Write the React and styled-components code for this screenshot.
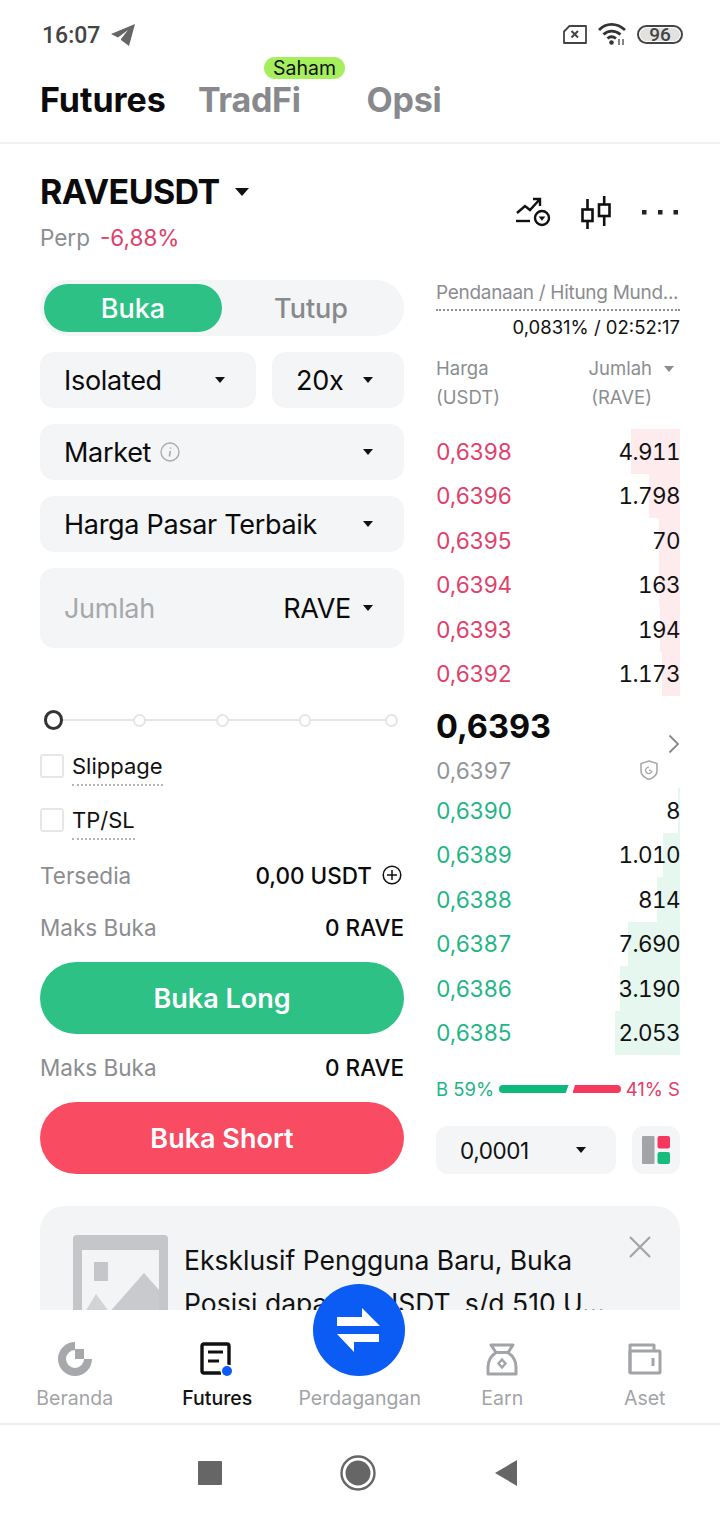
import React from "react";
import styled, { createGlobalStyle } from "styled-components";

const Global = createGlobalStyle`
  html, body { margin: 0; padding: 0; background: #fff; }
  * { box-sizing: border-box; }
  body { font-family: Inter, "Liberation Sans", sans-serif; color: #111; }
`;

const Page = styled.div`
  position: relative;
  width: 720px;
  height: 1520px;
  overflow: hidden;
  background: #fff;
  display: flex;
  flex-direction: column;
`;

const StatusBar = styled.div`
  height: 70px;
  padding: 0 37px 0 42px;
  display: flex;
  align-items: center;
  justify-content: space-between;
`;
const StatusLeft = styled.div`
  display: flex;
  align-items: center;
  gap: 10px;
  font-family: Roboto, sans-serif;
  font-size: 23px;
  font-weight: 500;
  color: #444;
`;
const StatusRight = styled.div`
  display: flex;
  align-items: center;
  gap: 11px;
  margin-top: -2px;
`;
const Battery = styled.div`
  width: 46px;
  height: 19px;
  border: 2px solid #444;
  border-radius: 10px;
  padding: 1px;
  display: flex;
`;
const BatteryFill = styled.div`
  flex: 1;
  background: #e2e2e2;
  border-radius: 8px;
  font-family: Roboto, sans-serif;
  font-size: 19px;
  font-weight: 500;
  line-height: 13px;
  text-align: center;
  color: #444;
`;

const Tabs = styled.div`
  position: relative;
  height: 74px;
  padding: 10px 40px 0;
  display: flex;
  align-items: flex-start;
  border-bottom: 2px solid #f1f2f3;
`;
const Tab = styled.div`
  font-size: 34px;
  line-height: 40px;
  font-weight: 700;
  letter-spacing: ${(p) => (p.$active ? 0 : -0.3)}px;
  color: ${(p) => (p.$active ? "#0b0b0b" : "#87898c")};
  margin-right: ${(p) => p.$gap || 0}px;
`;
const Badge = styled.div`
  position: absolute;
  left: 264px;
  top: -13px;
  width: 81px;
  height: 22px;
  border-radius: 11px;
  background: #a5ef5c;
  color: #111;
  font-size: 19.5px;
  line-height: 23px;
  text-align: center;
`;

const Main = styled.div`
  flex: 1;
  min-height: 0;
  overflow: hidden;
  padding: 0 40px;
`;

const SymbolHeader = styled.div`
  height: 134px;
  padding-top: 28px;
  display: flex;
  justify-content: space-between;
`;
const SymbolRow = styled.div`
  display: flex;
  align-items: center;
  gap: 15px;
  font-size: 34px;
  line-height: 40px;
  font-weight: 700;
  letter-spacing: -0.6px;
  color: #0b0b0b;
`;
const SubRow = styled.div`
  margin-top: 11px;
  display: flex;
  gap: 10px;
  font-size: 22.5px;
  line-height: 30px;
`;
const Muted = styled.span`
  color: #8b8d90;
`;
const Change = styled.span`
  color: #e0406a;
`;
const Tools = styled.div`
  display: flex;
  align-items: center;
  gap: 28px;
  padding-top: 18px;
  height: 62px;
`;

const Columns = styled.div`
  display: grid;
  grid-template-columns: 364px 244px;
  column-gap: 32px;
`;
const LeftCol = styled.div`
  display: flex;
  flex-direction: column;
`;
const RightCol = styled.div`
  display: flex;
  flex-direction: column;
`;

const Toggle = styled.div`
  height: 56px;
  border-radius: 28px;
  background: #f4f5f7;
  padding: 4px;
  display: grid;
  grid-template-columns: 178px 1fr;
  margin-top: 2px;
`;
const ToggleOpt = styled.div`
  border-radius: 24px;
  display: flex;
  align-items: center;
  justify-content: center;
  font-size: 27px;
  font-weight: 500;
  background: ${(p) => (p.$active ? "#2dc186" : "transparent")};
  color: ${(p) => (p.$active ? "#fff" : "#87898c")};
`;

const Fields = styled.div`
  display: flex;
  flex-direction: column;
  gap: 16px;
  margin-top: 16px;
`;
const FieldRow = styled.div`
  display: grid;
  grid-template-columns: 216px 132px;
  column-gap: 16px;
`;
const Field = styled.div`
  height: ${(p) => p.$h || 56}px;
  border-radius: 14px;
  background: #f4f5f7;
  padding: 0 31px 0 24px;
  display: flex;
  align-items: center;
  justify-content: space-between;
  font-size: 27px;
  letter-spacing: -0.3px;
  font-weight: 400;
  color: #0b0b0b;
`;
const FieldLabel = styled.span`
  display: inline-flex;
  align-items: center;
  gap: 9px;
`;
const Placeholder = styled.span`
  color: #a6a8ab;
`;
const Caret = styled.i`
  display: inline-block;
  width: 0;
  height: 0;
  border-left: ${(p) => p.$s || 5}px solid transparent;
  border-right: ${(p) => p.$s || 5}px solid transparent;
  border-top: ${(p) => (p.$s || 5) + 1}px solid ${(p) => p.$c || "#111"};
`;
const UnitCaret = styled.span`
  display: inline-flex;
  align-items: center;
  gap: 12px;
`;

const Slider = styled.div`
  position: relative;
  height: 20px;
  margin: 62px 6px 0 4px;
  display: flex;
  align-items: center;
  gap: 70px;
`;
const SliderLine = styled.div`
  position: absolute;
  left: 10px;
  right: 6px;
  top: 9px;
  height: 2px;
  background: #e4e5e7;
`;
const Knob = styled.div`
  position: relative;
  width: 20px;
  height: 20px;
  border-radius: 50%;
  background: #fff;
  border: 3px solid #333;
`;
const Dot = styled.div`
  position: relative;
  width: 13px;
  height: 13px;
  border-radius: 50%;
  background: #fff;
  border: 2px solid #e4e5e7;
  margin-left: ${(p) => (p.$last ? 4 : 0)}px;
`;

const CheckRow = styled.div`
  display: flex;
  align-items: flex-start;
  gap: 8px;
  margin-top: ${(p) => p.$mt}px;
`;
const CheckBox = styled.div`
  width: 24px;
  height: 24px;
  border: 2px solid #e6e7e8;
  border-radius: 3px;
  background: #fff;
`;
const CheckLabel = styled.div`
  font-size: 22px;
  line-height: 24px;
  padding-bottom: 6px;
  border-bottom: 2px dotted #b4b5b7;
  color: #111;
`;

const InfoRow = styled.div`
  display: flex;
  align-items: center;
  justify-content: space-between;
  height: 30px;
  margin-top: ${(p) => p.$mt || 0}px;
  font-size: 22.5px;
`;
const InfoValue = styled.span`
  display: inline-flex;
  align-items: center;
  gap: 10px;
  color: #0b0b0b;
  font-weight: 500;
  padding-right: ${(p) => p.$pr || 0}px;
`;
const ActionBtn = styled.div`
  height: 72px;
  margin-top: ${(p) => p.$mt || 0}px;
  border-radius: 36px;
  background: ${(p) => p.$bg};
  color: #fff;
  font-size: 27px;
  font-weight: 600;
  display: flex;
  align-items: center;
  justify-content: center;
`;

const Funding = styled.div`
  font-size: 19px;
  letter-spacing: -0.3px;
  line-height: 26px;
  color: #8b8d90;
  border-bottom: 2px dotted #8f9092;
  margin-top: 2px;
  padding-bottom: 3px;
  white-space: nowrap;
`;
const FundingValue = styled.div`
  font-size: 18.5px;
  line-height: 26px;
  text-align: right;
  color: #111;
  margin-top: 3px;
`;
const BookHead = styled.div`
  display: flex;
  justify-content: space-between;
  margin-top: 14px;
  font-size: 18.5px;
  line-height: 29px;
  color: #8b8d90;
`;
const HeadRight = styled.div`
  display: grid;
  grid-template-columns: auto 22px;
  text-align: right;
  align-items: center;
  justify-items: end;
  padding-right: 6px;
`;
const Rows = styled.div`
  margin-top: ${(p) => p.$mt || 0}px;
`;
const Row = styled.div`
  position: relative;
  height: 44.5px;
  display: flex;
  align-items: center;
  justify-content: space-between;
  font-size: 22.5px;
  letter-spacing: -0.6px;
  font-variant-numeric: tabular-nums;
`;
const Depth = styled.div`
  position: absolute;
  right: 0;
  top: 0;
  bottom: 0;
  background: ${(p) => (p.$side === "ask" ? "#fdebee" : "#e6f7f0")};
`;
const Price = styled.span`
  position: relative;
  color: ${(p) => (p.$side === "ask" ? "#e0406a" : "#1fb585")};
`;
const Qty = styled.span`
  position: relative;
  color: #111;
`;
const Mid = styled.div`
  margin-top: 9px;
  height: 44px;
  font-size: 32.5px;
  line-height: 44px;
  font-weight: 700;
  color: #0b0b0b;
  display: flex;
  justify-content: space-between;
`;
const Chevron = styled.div`
  padding-top: 16px;
`;
const MarkRow = styled.div`
  height: 34px;
  margin-top: 4px;
  margin-bottom: 1px;
  display: flex;
  align-items: center;
  justify-content: space-between;
  font-size: 22.5px;
  letter-spacing: -0.6px;
  font-variant-numeric: tabular-nums;
  color: #929497;
  padding-right: 22px;
`;
const Ratio = styled.div`
  margin-top: 21px;
  display: flex;
  align-items: center;
  justify-content: space-between;
  font-size: 18.5px;
  line-height: 26px;
`;
const RatioText = styled.span`
  color: ${(p) => p.$c};
`;
const RatioBars = styled.div`
  display: flex;
  gap: 4px;
  width: 122px;
`;
const RatioBar = styled.div`
  height: 8px;
  background: ${(p) => p.$c};
  flex: ${(p) => p.$f};
  border-radius: ${(p) => p.$r};
  clip-path: ${(p) => p.$clip};
`;
const BookFoot = styled.div`
  display: grid;
  grid-template-columns: 180px 48px;
  justify-content: space-between;
  margin-top: 24px;
`;
const StepSelect = styled.div`
  height: 48px;
  border-radius: 12px;
  background: #f4f5f7;
  padding: 0 30px 0 24px;
  display: flex;
  align-items: center;
  justify-content: space-between;
  font-size: 22.5px;
  letter-spacing: -0.4px;
`;
const LayoutBtn = styled.div`
  height: 48px;
  border-radius: 12px;
  background: #f4f5f7;
  display: flex;
  align-items: center;
  justify-content: center;
`;

const Promo = styled.div`
  position: relative;
  margin-top: 32px;
  height: 180px;
  border-radius: 24px;
  background: #f3f4f6;
  padding: 29px 0 0 33px;
  display: flex;
  gap: 16px;
`;
const PromoText = styled.div`
  font-size: 26.5px;
  line-height: 43px;
  color: #111;
  white-space: pre;
  margin-top: 4px;
`;
const PromoClose = styled.div`
  position: absolute;
  right: 28px;
  top: 29px;
`;

const BottomNav = styled.div`
  position: relative;
  height: 115px;
  background: #fff;
  display: grid;
  grid-template-columns: repeat(5, 142.5px);
  align-content: start;
  padding: 30px 0 0 3.5px;
  border-bottom: 2px solid #ececee;
`;
const NavItem = styled.div`
  display: flex;
  flex-direction: column;
  align-items: center;
  font-size: 19.5px;
  font-weight: ${(p) => (p.$active ? 500 : 400)};
  color: ${(p) => (p.$active ? "#111" : "#a2a4a7")};
`;
const NavIcon = styled.div`
  height: 38px;
  display: flex;
  align-items: center;
  justify-content: center;
`;
const NavLabel = styled.div`
  margin-top: 8px;
  line-height: 24px;
`;
const Fab = styled.div`
  position: absolute;
  left: 313px;
  top: -26px;
  width: 92px;
  height: 92px;
  border-radius: 50%;
  background: #0a5cf5;
  display: flex;
  align-items: center;
  justify-content: center;
`;
const SysNav = styled.div`
  height: 95px;
  background: #fff;
  display: flex;
  align-items: center;
  gap: 118px;
  padding-left: 198px;
`;

const asks = [
  ["0,6398", "4.911", 49],
  ["0,6396", "1.798", 31],
  ["0,6395", "70", 21],
  ["0,6394", "163", 21],
  ["0,6393", "194", 20],
  ["0,6392", "1.173", 18],
];
const bids = [
  ["0,6390", "8", 2],
  ["0,6389", "1.010", 17],
  ["0,6388", "814", 23],
  ["0,6387", "7.690", 52],
  ["0,6386", "3.190", 60],
  ["0,6385", "2.053", 65],
];

const BookRows = ({ data, side, mt }) => (
  <Rows $mt={mt}>
    {data.map(([p, q, w]) => (
      <Row key={p}>
        <Depth $side={side} style={{ width: w }} />
        <Price $side={side}>{p}</Price>
        <Qty>{q}</Qty>
      </Row>
    ))}
  </Rows>
);

const Plane = () => (
  <svg width="26" height="24" viewBox="0 0 26 24">
    <path d="M25 1 L1 11 L8 14.5 L18 7 L11 16 L11 17 L19 23 Z" fill="#666" />
  </svg>
);
const Sim = () => (
  <svg width="24" height="19" viewBox="0 0 24 19" fill="none" stroke="#444" strokeWidth="1.8">
    <path d="M6.5 1 H23 V18 H1 V6.5 Z" strokeLinejoin="round" />
    <path d="M8.5 6 L15 12.5 M15 6 L8.5 12.5" strokeWidth="2" />
  </svg>
);
const Wifi = () => (
  <svg width="28" height="24" viewBox="0 0 28 24" fill="none" stroke="#333" strokeWidth="2.8">
    <path d="M1 8 C8 0.5 19 0.5 27 8" />
    <path d="M5.5 12.5 C10 8 17 8 22.5 12.5" />
    <path d="M9.5 16.5 C12 14.2 15 14.2 18 16.5" />
    <circle cx="13.5" cy="20.5" r="2.3" fill="#333" stroke="none" />
    <path d="M21 23 V17 M25 23 V17" strokeWidth="1.2" />
  </svg>
);
const AlertLine = () => (
  <svg width="36" height="30" viewBox="0 0 36 30" fill="none" stroke="#111" strokeWidth="2.4">
    <path d="M1 16 L9 9 L14 13 L24 2 M17 2 H24 V9" />
    <path d="M0 24 H14" />
    <circle cx="26" cy="21" r="7" />
    <path d="M22.6 19.5 H29.4 L26 23.8 Z" fill="#111" stroke="none" />
  </svg>
);
const Candles = () => (
  <svg width="32" height="33" viewBox="0 0 32 33" fill="none" stroke="#111" strokeWidth="2.6">
    <rect x="2.5" y="13.5" width="10" height="11.5" />
    <path d="M7.5 3 V13.5 M7.5 25 V33" />
    <rect x="19" y="8.5" width="10.5" height="11.5" />
    <path d="M24.2 0 V8.5 M24.2 20 V30" />
  </svg>
);
const Dots = () => (
  <svg width="40" height="6" viewBox="0 0 40 6" fill="#222">
    <rect x="2" y="1" width="4.5" height="4.5" />
    <rect x="18" y="1" width="4.5" height="4.5" />
    <rect x="33.5" y="1" width="4.5" height="4.5" />
  </svg>
);
const Info = () => (
  <svg width="20" height="20" viewBox="0 0 20 20" fill="none" stroke="#a9abae" strokeWidth="1.4">
    <circle cx="10" cy="10" r="9" />
    <path d="M10.6 5.5 V6.8 M10.3 9 L9.4 14.5" strokeWidth="1.6" />
  </svg>
);
const PlusCircle = () => (
  <svg width="20" height="20" viewBox="0 0 20 20" fill="none" stroke="#111" strokeWidth="1.5">
    <circle cx="10" cy="10" r="8.8" />
    <path d="M10 5 V15 M5 10 H15" />
  </svg>
);
const ChevronIcon = () => (
  <svg width="12" height="20" viewBox="0 0 12 20" fill="none" stroke="#87898c" strokeWidth="1.8">
    <path d="M1.5 1.5 L10 10 L1.5 18.5" />
  </svg>
);
const Shield = () => (
  <svg width="18" height="20" viewBox="0 0 18 20" fill="none" stroke="#a6a8ab" strokeWidth="1.6">
    <path d="M9 1 L17 3.5 V11 C17 15 13 18 9 19.5 C5 18 1 15 1 11 V3.5 Z" />
    <path d="M12 10.5 A3.2 3.2 0 1 1 9 7.2 M9 10.5 H11" strokeWidth="1.3" />
  </svg>
);
const LayoutIcon = () => (
  <svg width="28" height="28" viewBox="0 0 28 28">
    <rect x="0" y="0" width="12.5" height="28" rx="1" fill="#a2a4a7" />
    <rect x="15.5" y="0" width="12.5" height="12.5" rx="2" fill="#f5385e" />
    <rect x="15.5" y="16" width="12.5" height="12" rx="2" fill="#17bb7c" />
  </svg>
);
const ImagePlaceholder = () => (
  <svg width="95" height="96" viewBox="0 0 95 96" style={{ flex: "none" }}>
    <path fillRule="evenodd" d="M4 0 H91 Q95 0 95 4 V92 Q95 96 91 96 H4 Q0 96 0 92 V4 Q0 0 4 0 Z M9 15 V96 H86 V15 Z" fill="#c4c6c9" />
    <rect x="21" y="27" width="14" height="19" fill="#c4c6c9" />
    <path d="M71 38 L86 55 V96 H20 Z" fill="#c8cacd" />
    <path d="M23 59 L9 82 V96 H45 L37 78 Z" fill="#d2d3d6" />
  </svg>
);
const CloseIcon = () => (
  <svg width="24" height="24" viewBox="0 0 24 24" fill="none" stroke="#a2a4a7" strokeWidth="2.2">
    <path d="M2 2 L22 22 M22 2 L2 22" />
  </svg>
);
const HomeIcon = () => (
  <svg width="34" height="34" viewBox="0 0 34 34" fill="#a6a8ab">
    <path d="M17 0 A17 17 0 1 0 34 17 L26 17 A9 9 0 1 1 17 8 Z" />
    <rect x="17" y="7" width="9" height="10" />
  </svg>
);
const FuturesIcon = () => (
  <svg width="36" height="36" viewBox="0 0 36 36" fill="none">
    <path d="M22 32 H5 Q3 32 3 30 V5 Q3 3 5 3 H28 Q30 3 30 5 V24" stroke="#111" strokeWidth="3.4" />
    <path d="M9 11 H24 M9 20 H20" stroke="#111" strokeWidth="3" />
    <circle cx="28" cy="30" r="6.5" fill="#fff" />
    <circle cx="28" cy="30" r="5" fill="#0a5cf5" />
  </svg>
);
const EarnIcon = () => (
  <svg width="32" height="33" viewBox="0 0 32 33" fill="none" stroke="#a2a4a7" strokeWidth="3">
    <path d="M5 2 H27 L22 9.5 H10 Z" strokeLinejoin="round" />
    <path d="M10 9.5 C5 13 2 18 2 24 V31 H30 V24 C30 18 27 13 22 9.5" strokeLinejoin="round" />
    <path d="M16 16.5 L19.5 20.5 L16 24.5 L12.5 20.5 Z" strokeWidth="2.4" />
  </svg>
);
const AssetIcon = () => (
  <svg width="34" height="32" viewBox="0 0 34 32" fill="none" stroke="#a2a4a7" strokeWidth="3">
    <path d="M2 30 V2 H26 V8" strokeLinejoin="round" />
    <rect x="2" y="8" width="30" height="22" rx="1" />
    <path d="M25 15 V23" />
  </svg>
);
const SwapIcon = () => (
  <svg width="44" height="45" viewBox="0 0 44 45" fill="#fff">
    <path d="M25 0 L43 18 H0 V9 H25 Z" />
    <path d="M0 26 H42 V34 H17 V44 Z" />
  </svg>
);
const SysStop = () => (
  <svg width="24" height="24" viewBox="0 0 24 24"><rect width="24" height="24" rx="1" fill="#666" /></svg>
);
const SysHome = () => (
  <svg width="36" height="36" viewBox="0 0 36 36">
    <circle cx="18" cy="18" r="16.5" fill="none" stroke="#666" strokeWidth="2.4" />
    <circle cx="18" cy="18" r="12.5" fill="#666" />
  </svg>
);
const SysBack = () => (
  <svg width="24" height="26" viewBox="0 0 24 26"><path d="M23 0 V26 L1 13 Z" fill="#666" /></svg>
);

export default function App() {
  return (
    <Page>
      <Global />
      <StatusBar>
        <StatusLeft>16:07 <Plane /></StatusLeft>
        <StatusRight>
          <Sim />
          <Wifi />
          <Battery><BatteryFill>96</BatteryFill></Battery>
        </StatusRight>
      </StatusBar>
      <Tabs>
        <Tab $active $gap={32}>Futures</Tab>
        <Tab $gap={66}>TradFi</Tab>
        <Tab>Opsi</Tab>
        <Badge>Saham</Badge>
      </Tabs>
      <Main>
        <SymbolHeader>
          <div>
            <SymbolRow>RAVEUSDT <Caret $s={7} /></SymbolRow>
            <SubRow><Muted>Perp</Muted><Change>-6,88%</Change></SubRow>
          </div>
          <Tools>
            <AlertLine />
            <Candles />
            <Dots />
          </Tools>
        </SymbolHeader>
        <Columns>
          <LeftCol>
            <Toggle>
              <ToggleOpt $active>Buka</ToggleOpt>
              <ToggleOpt>Tutup</ToggleOpt>
            </Toggle>
            <Fields>
              <FieldRow>
                <Field>Isolated <Caret /></Field>
                <Field>20x <Caret /></Field>
              </FieldRow>
              <Field><FieldLabel>Market <Info /></FieldLabel><Caret /></Field>
              <Field>Harga Pasar Terbaik <Caret /></Field>
              <Field $h={80}>
                <Placeholder>Jumlah</Placeholder>
                <UnitCaret>RAVE <Caret /></UnitCaret>
              </Field>
            </Fields>
            <Slider>
              <SliderLine />
              <Knob />
              <Dot /><Dot /><Dot /><Dot $last />
            </Slider>
            <CheckRow $mt={24}><CheckBox /><CheckLabel>Slippage</CheckLabel></CheckRow>
            <CheckRow $mt={22}><CheckBox /><CheckLabel>TP/SL</CheckLabel></CheckRow>
            <InfoRow $mt={20}><Muted>Tersedia</Muted><InfoValue $pr={2}>0,00 USDT <PlusCircle /></InfoValue></InfoRow>
            <InfoRow $mt={22}><Muted>Maks Buka</Muted><InfoValue>0 RAVE</InfoValue></InfoRow>
            <ActionBtn $bg="#2dc186" $mt={20}>Buka Long</ActionBtn>
            <InfoRow $mt={18}><Muted>Maks Buka</Muted><InfoValue>0 RAVE</InfoValue></InfoRow>
            <ActionBtn $bg="#f94c62" $mt={20}>Buka Short</ActionBtn>
          </LeftCol>
          <RightCol>
            <Funding>Pendanaan / Hitung Mund...</Funding>
            <FundingValue>0,0831% / 02:52:17</FundingValue>
            <BookHead>
              <div>Harga<br />(USDT)</div>
              <HeadRight>
                <span>Jumlah</span><Caret $c="#8b8d90" />
                <span>(RAVE)</span><span />
              </HeadRight>
            </BookHead>
            <BookRows data={asks} side="ask" mt={17} />
            <Mid>0,6393<Chevron><ChevronIcon /></Chevron></Mid>
            <MarkRow>0,6397 <Shield /></MarkRow>
            <BookRows data={bids} side="bid" mt={0} />
            <Ratio>
              <RatioText $c="#1fb585">B 59%</RatioText>
              <RatioBars>
                <RatioBar $c="#0fb97c" $f={59} $r="4px 0 0 4px" $clip="polygon(0 0, 100% 0, 96% 100%, 0 100%)" />
                <RatioBar $c="#f5385e" $f={41} $r="0 4px 4px 0" $clip="polygon(5% 0, 100% 0, 100% 100%, 0 100%)" />
              </RatioBars>
              <RatioText $c="#e0406a">41% S</RatioText>
            </Ratio>
            <BookFoot>
              <StepSelect>0,0001 <Caret /></StepSelect>
              <LayoutBtn><LayoutIcon /></LayoutBtn>
            </BookFoot>
          </RightCol>
        </Columns>
        <Promo>
          <ImagePlaceholder />
          <PromoText>{"Eksklusif Pengguna Baru, Buka\nPosisi dapat 10 USDT, s/d 510 U..."}</PromoText>
          <PromoClose><CloseIcon /></PromoClose>
        </Promo>
      </Main>
      <BottomNav>
        <NavItem><NavIcon><HomeIcon /></NavIcon><NavLabel>Beranda</NavLabel></NavItem>
        <NavItem $active><NavIcon><FuturesIcon /></NavIcon><NavLabel>Futures</NavLabel></NavItem>
        <NavItem><NavIcon /><NavLabel>Perdagangan</NavLabel></NavItem>
        <NavItem><NavIcon><EarnIcon /></NavIcon><NavLabel>Earn</NavLabel></NavItem>
        <NavItem><NavIcon><AssetIcon /></NavIcon><NavLabel>Aset</NavLabel></NavItem>
        <Fab><SwapIcon /></Fab>
      </BottomNav>
      <SysNav>
        <SysStop />
        <SysHome />
        <SysBack />
      </SysNav>
    </Page>
  );
}
